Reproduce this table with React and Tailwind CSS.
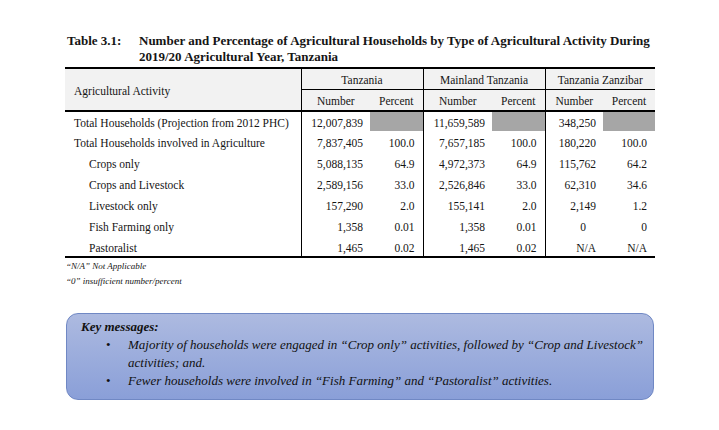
const rows = [
  { label: "Total Households (Projection from 2012 PHC)", indent: false, v: ["12,007,839", null, "11,659,589", null, "348,250", null], h: "h-[20px]" },
  { label: "Total Households involved in Agriculture", indent: false, v: ["7,837,405", "100.0", "7,657,185", "100.0", "180,220", "100.0"], h: "h-[21px]" },
  { label: "Crops only", indent: true, v: ["5,088,135", "64.9", "4,972,373", "64.9", "115,762", "64.2"], h: "h-[21px]" },
  { label: "Crops and Livestock", indent: true, v: ["2,589,156", "33.0", "2,526,846", "33.0", "62,310", "34.6"], h: "h-[21px]" },
  { label: "Livestock only", indent: true, v: ["157,290", "2.0", "155,141", "2.0", "2,149", "1.2"], h: "h-[21px]" },
  { label: "Fish Farming only", indent: true, v: ["1,358", "0.01", "1,358", "0.01", "0", "0"], h: "h-[21px]" },
  { label: "Pastoralist", indent: true, v: ["1,465", "0.02", "1,465", "0.02", "N/A", "N/A"], h: "h-[21px]" },
];

function Cell({ value, idx }) {
  const groupStart = idx % 2 === 0;
  const base = "text-right pr-[7px] pt-[3px] align-middle " + (groupStart ? "border-l border-black " : "pr-[8px] ");
  if (value === null) {
    return <td className={base + "bg-[#a6a6a6]"}></td>;
  }
  const extra = value === "0" && idx === 4 ? "pr-[17px] " : "";
  return <td className={base + extra}>{value}</td>;
}

export default function App() {
  return (
    <div className="w-[719px] h-[430px] bg-white overflow-hidden font-['Liberation_Serif',serif] text-[#151515]">
      <div className="pl-[67px] pt-[33px] flex text-[13px] font-bold leading-[16px]">
        <div className="w-[72px] shrink-0">Table 3.1:</div>
        <div>
          Number and Percentage of Agricultural Households by Type of Agricultural Activity During
          <br />
          2019/20 Agricultural Year, Tanzania
        </div>
      </div>

      <table className="ml-[65px] mt-[2px] table-fixed border-collapse w-[590px] text-[11.5px] leading-[16px]">
        <colgroup>
          <col className="w-[236px]" />
          <col className="w-[69px]" />
          <col className="w-[53px]" />
          <col className="w-[69px]" />
          <col className="w-[53px]" />
          <col className="w-[58px]" />
          <col className="w-[52px]" />
        </colgroup>
        <thead className="bg-[#f2f2f2]">
          <tr className="h-[21px] border-t-2 border-black">
            <th rowSpan={2} className="text-left font-normal pl-[9px] pt-[2px] align-middle">
              Agricultural Activity
            </th>
            <th colSpan={2} className="font-normal border-l border-b border-black pt-[2px]">Tanzania</th>
            <th colSpan={2} className="font-normal border-l border-b border-black pt-[2px]">Mainland Tanzania</th>
            <th colSpan={2} className="font-normal border-l border-b border-black pt-[2px]">Tanzania Zanzibar</th>
          </tr>
          <tr className="h-[22px] border-b-2 border-black">
            <th className="font-normal border-l border-black pt-[2px]">Number</th>
            <th className="font-normal pt-[2px]">Percent</th>
            <th className="font-normal border-l border-black pt-[2px]">Number</th>
            <th className="font-normal pt-[2px]">Percent</th>
            <th className="font-normal border-l border-black pt-[2px]">Number</th>
            <th className="font-normal pt-[2px]">Percent</th>
          </tr>
        </thead>
        <tbody>
          {rows.map((r, i) => (
            <tr key={i} className={r.h + (i === rows.length - 1 ? " border-b-2 border-black" : "")}>
              <td className={"pt-[3px] align-middle " + (r.indent ? "pl-[24px]" : "pl-[9px]")}>{r.label}</td>
              {r.v.map((val, j) => (
                <Cell key={j} value={val} idx={j} />
              ))}
            </tr>
          ))}
        </tbody>
      </table>

      <div className="pl-[66px] pt-[1px] text-[9px] italic leading-[15px]">
        <div>“N/A” Not Applicable</div>
        <div>“0” insufficient number/percent</div>
      </div>

      <div className="ml-[66px] mt-[24px] w-[588px] h-[87px] rounded-[12px] border border-[#7088c4] bg-gradient-to-b from-[#adbae0] to-[#8a9fd8] pl-[14px] pt-[4px] text-[13px] italic leading-[18px] text-[#111]">
        <div className="font-bold">Key messages:</div>
        <ul>
          <li className="flex">
            <span className="w-[47px] pl-[25px] shrink-0 not-italic">•</span>
            <span>
              Majority of households were engaged in “Crop only” activities, followed by “Crop and Livestock”
              <br />
              activities; and.
            </span>
          </li>
          <li className="flex">
            <span className="w-[47px] pl-[25px] shrink-0 not-italic">•</span>
            <span>Fewer households were involved in “Fish Farming” and “Pastoralist” activities.</span>
          </li>
        </ul>
      </div>
    </div>
  );
}
